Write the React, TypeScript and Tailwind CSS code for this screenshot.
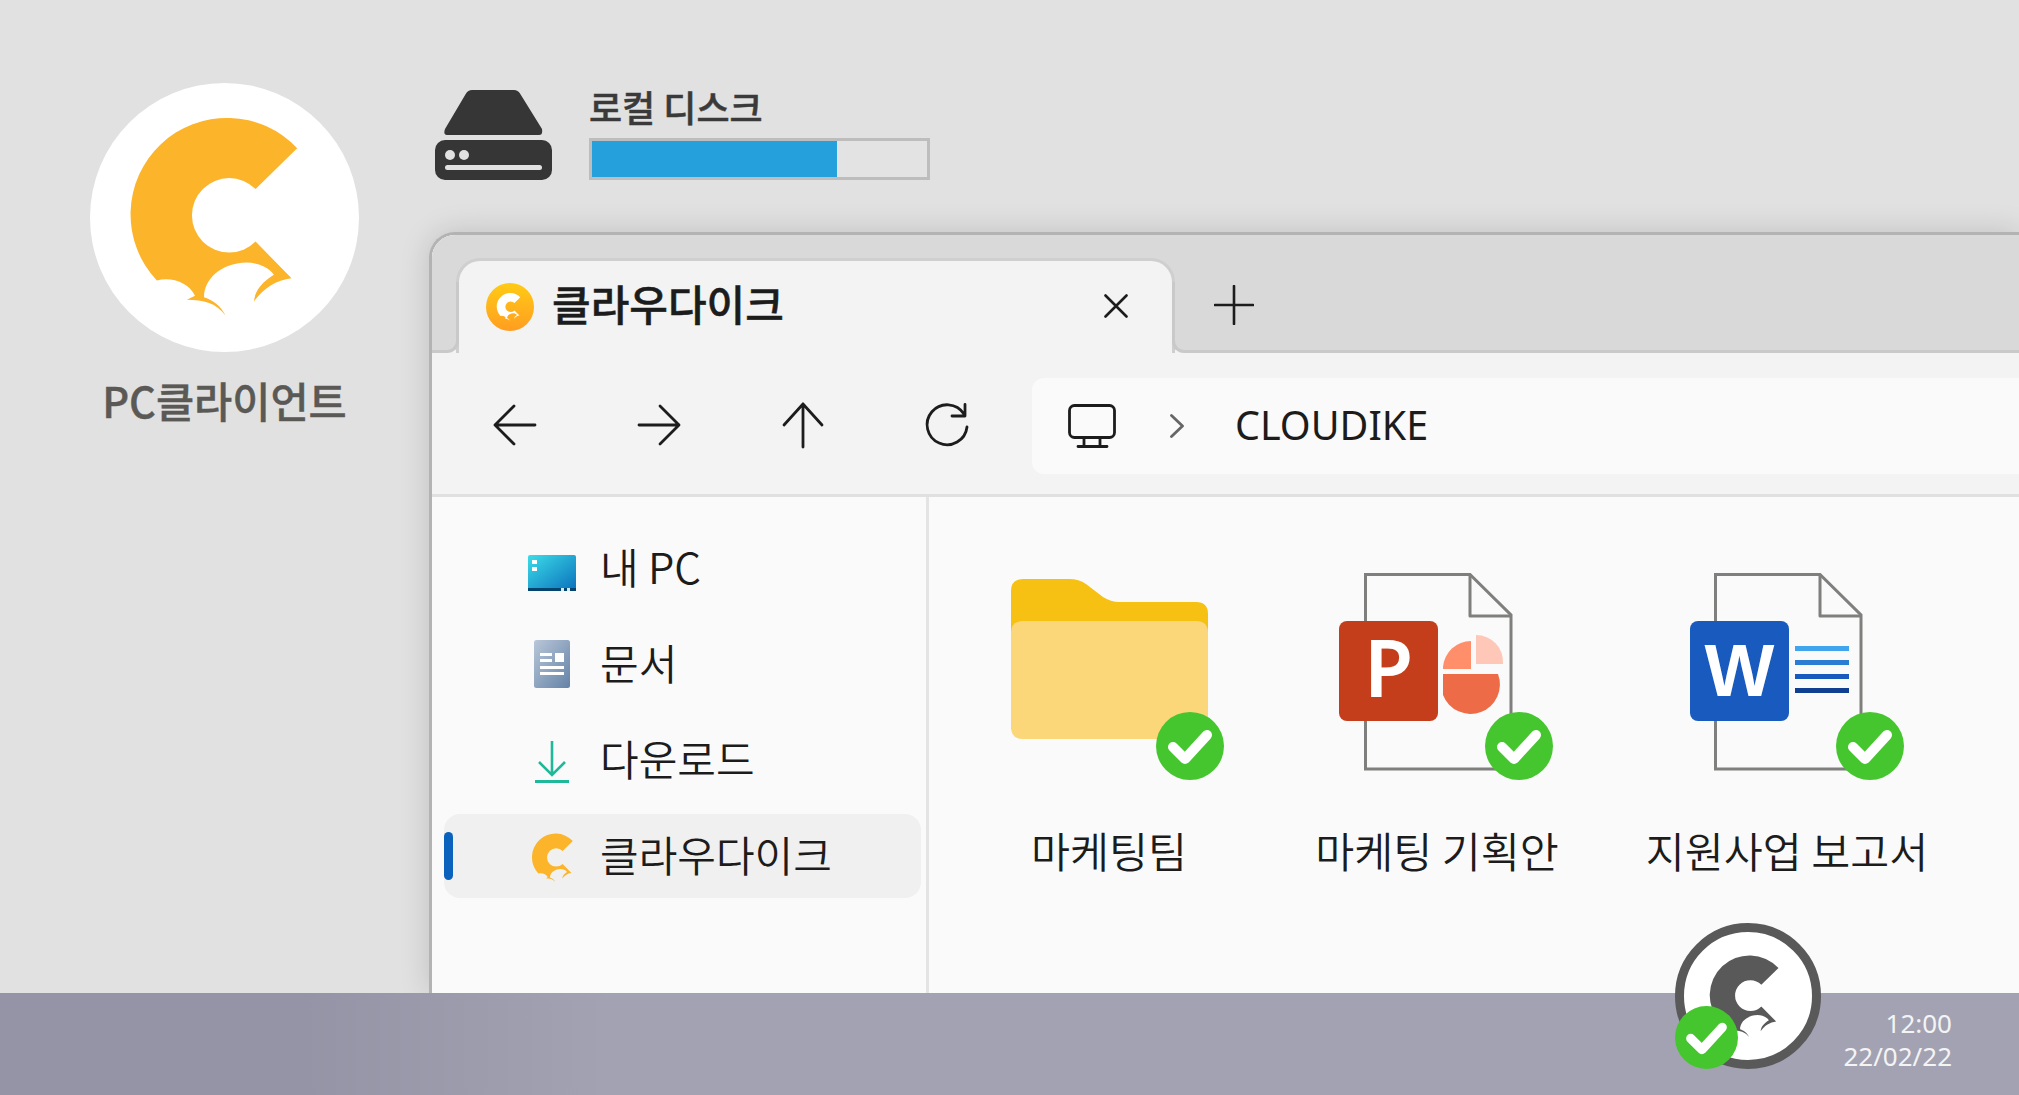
const LOGO = "M712 264A290 290 0 1 0 290 662C330 650 385 665 405 708L380 720C430 720 470 730 497 768C480 735 460 722 432 712C432 660 480 610 560 608C590 608 625 620 642 645C610 665 585 690 582 725C610 685 650 660 695 655L587 545A112 112 0 1 1 587 387Z";

function Logo({ className, fill }: { className: string; fill: string }) {
  return (
    <svg viewBox="90 68 807 809" className={className}>
      <path d={LOGO} fill={fill} />
    </svg>
  );
}

function Badge({ className }: { className: string }) {
  return (
    <svg viewBox="0 0 68 68" className={className}>
      <circle cx="34" cy="34" r="34" fill="#45c52e" />
      <path d="M17 35L29 47L51 23" fill="none" stroke="#fff" strokeWidth="10" strokeLinecap="round" strokeLinejoin="round" />
    </svg>
  );
}

function ToolIcon({ d }: { d: string }) {
  return (
    <svg viewBox="0 0 48 48" className="w-12 h-12 shrink-0 -mt-[2px]">
      <path d={d} fill="none" stroke="#1c1c1c" strokeWidth="2.8" strokeLinecap="round" strokeLinejoin="round" />
    </svg>
  );
}

function Page({ children }: { children: React.ReactNode }) {
  return (
    <svg viewBox="-27 -3 200 204" className="w-[200px] h-[204px]">
      <path d="M1.5 1.5H106L147 42V196H1.5Z" fill="#fafafa" stroke="#7f7f7d" strokeWidth="3" />
      <path d="M106 1.5V43H147" fill="none" stroke="#7f7f7d" strokeWidth="3" strokeLinejoin="round" />
      {children}
    </svg>
  );
}

function DocItem({ w, label, icon }: { w: string; label: string; icon: React.ReactNode }) {
  return (
    <div className={`${w} flex flex-col items-center shrink-0`}>
      <div className="relative h-[212px] w-[200px] flex justify-center">{icon}</div>
      <div className="mt-[37px] text-[42.4px] leading-[62px] font-[350] text-[#1c1c1c] whitespace-nowrap">{label}</div>
    </div>
  );
}

function SideRow({ icon, label, active }: { icon: React.ReactNode; label: string; active?: boolean }) {
  return (
    <div className={`relative h-[84px] w-[477px] rounded-[16px] flex items-center ${active ? "bg-[#f0f0f0]" : ""}`}>
      {active && <div className="absolute left-0 top-[18px] h-[48px] w-[9px] rounded-full bg-[#0a62bc]" />}
      <div className="ml-[78px] w-[60px] h-[84px] flex items-center justify-center shrink-0">{icon}</div>
      <div className="ml-[18px] pb-[5px] text-[42px] leading-[60px] font-[350] text-[#1c1c1c] whitespace-nowrap">{label}</div>
    </div>
  );
}

export default function App() {
  return (
    <div className="w-[2019px] h-[1095px] relative overflow-hidden flex flex-col bg-[#e1e1e1] font-['Noto_Sans_CJK_KR',sans-serif]">
      <div className="h-[993px] flex overflow-hidden">
        <div className="w-[429px] shrink-0 flex flex-col items-start pl-[90px] pt-[83px]">
          <div className="w-[269px] h-[269px] rounded-full bg-white">
            <Logo className="w-[269px] h-[269px]" fill="#fcb42b" />
          </div>
          <div className="w-[269px] mt-[18px] text-center text-[41.5px] leading-[60px] font-medium text-[#5a5955] whitespace-nowrap [-webkit-text-stroke:0.4px_#5a5955]">PC클라이언트</div>
        </div>

        <div className="flex-1 flex flex-col min-w-0">
          <div className="h-[232px] shrink-0 flex items-start pt-[90px]">
            <svg viewBox="0 0 117 90" className="w-[117px] h-[90px] ml-[6px] shrink-0">
              <path d="M10 39L31 3.5Q33 0 37 0H79Q83 0 85 3.5L107 39Q108 45 104 45H12Q8 45 10 39Z" fill="#363636" />
              <rect x="0" y="50" width="117" height="40" rx="10" fill="#363636" />
              <circle cx="15" cy="65" r="5" fill="#e1e1e1" />
              <circle cx="29" cy="65" r="5" fill="#e1e1e1" />
              <rect x="10" y="75" width="97" height="5" rx="2.5" fill="#e1e1e1" />
            </svg>
            <div className="ml-[37px] flex flex-col w-[341px]">
              <div className="text-[36px] leading-[40px] -mt-[4px] h-[52px] font-medium text-[#3a3a3a] whitespace-nowrap [-webkit-text-stroke:0.5px_#3a3a3a]">로컬 디스크</div>
              <div className="h-[42px] border-[3px] border-[#bdbdbd] bg-[#e3e3e3]">
                <div className="h-full w-[73%] bg-[#26a0dc]" />
              </div>
            </div>
          </div>

          <div className="flex-1 flex flex-col rounded-tl-[26px] border-l-[3px] border-t-[3px] border-[#b3b3b3] bg-[#fafafa] overflow-hidden shadow-[0_0_30px_rgba(0,0,0,0.15)]">
            <div className="h-[118px] shrink-0 flex bg-[#f3f3f3]">
              <div className="w-[24px] shrink-0 flex flex-col">
                <div className="h-[47px] shrink-0 bg-[#d9d9d9]" />
                <div className="flex-1 w-[27px] relative z-10 bg-[#d9d9d9] border-b-[3px] border-r-[3px] border-[#c9c9c9] rounded-br-[12px]" />
              </div>
              <div className="w-[719px] shrink-0 bg-[#d9d9d9] pt-[23px]">
                <div className="h-[95px] bg-[#f3f3f3] rounded-t-[24px] border-t-[3px] border-l-[3px] border-r-[3px] border-[#cfcfcf] flex items-center pl-[27px] pr-[44px]">
                  <div className="w-12 h-12 rounded-full bg-gradient-to-b from-[#ffcb14] to-[#ff9d20] flex items-center justify-center shrink-0">
                    <Logo className="w-[38px] h-[38px]" fill="#fff" />
                  </div>
                  <div className="ml-[18px] pb-[8px] text-[42px] leading-[60px] font-medium text-[#1c1c1c] whitespace-nowrap [-webkit-text-stroke:0.5px_#1c1c1c]">클라우다이크</div>
                  <svg viewBox="0 0 24 24" className="w-6 h-6 ml-auto mb-[2px] shrink-0">
                    <path d="M1.5 1.5L22.5 22.5M22.5 1.5L1.5 22.5" stroke="#1c1c1c" strokeWidth="2.6" strokeLinecap="round" />
                  </svg>
                </div>
              </div>
              <div className="flex-1 flex flex-col min-w-0">
                <div className="h-[47px] shrink-0 bg-[#d9d9d9]" />
                <div className="flex-1 -ml-[3px] relative z-10 bg-[#d9d9d9] border-b-[3px] border-l-[3px] border-[#c9c9c9] rounded-bl-[12px] flex items-center pl-[39px] pb-[22px]">
                  <svg viewBox="0 0 40 40" className="w-10 h-10 shrink-0 -mb-[24px] -mt-[24px]">
                    <path d="M20 1V39M1 20H39" stroke="#1c1c1c" strokeWidth="2.6" strokeLinecap="round" />
                  </svg>
                </div>
              </div>
            </div>

            <div className="h-[144px] shrink-0 flex items-center bg-[#f3f3f3] border-b-[3px] border-[#e0e0e0] pl-[59px] pt-[5px] gap-[96px]">
              <ToolIcon d="M44 24H4M23 5L4 24L23 43" />
              <ToolIcon d="M4 24H44M25 5L44 24L25 43" />
              <ToolIcon d="M24 46V3M5 24L24 3L43 24" />
              <ToolIcon d="M44 26A20 20 0 1 1 41 13M42 3.5V15H29" />
              <div className="flex-1 -ml-[35px] h-[96px] rounded-l-[12px] bg-[#fafafa] flex items-center pl-[36px]">
                <svg viewBox="0 0 48 44" className="w-12 h-11 shrink-0">
                  <rect x="1.5" y="1.5" width="45" height="32" rx="5" fill="none" stroke="#1c1c1c" strokeWidth="2.8" />
                  <path d="M16 34V42M32 34V42M10 42.5H39" fill="none" stroke="#1c1c1c" strokeWidth="2.8" strokeLinecap="round" />
                </svg>
                <svg viewBox="0 0 14 24" className="w-[14px] h-6 ml-[54px] shrink-0">
                  <path d="M1.5 1.5L12.5 12L1.5 22.5" fill="none" stroke="#666666" strokeWidth="2.8" strokeLinecap="round" strokeLinejoin="round" />
                </svg>
                <div className="ml-[51px] pb-[2px] text-[39.5px] leading-[50px] text-[#1c1c1c] font-['Noto_Sans',sans-serif] whitespace-nowrap">CLOUDIKE</div>
              </div>
            </div>

            <div className="flex-1 flex bg-[#fafafa]">
              <div className="w-[497px] shrink-0 border-r-[3px] border-[#e4e4e4] pl-[12px] pt-[29px] flex flex-col gap-[12px]">
                <SideRow
                  label="내 PC"
                  icon={
                    <svg viewBox="0 0 48 36" className="w-12 h-9 mt-[10px]">
                      <defs>
                        <linearGradient id="pc" x1="0" y1="0" x2="1" y2="1">
                          <stop offset="0" stopColor="#3cdde8" />
                          <stop offset="1" stopColor="#0a6fbc" />
                        </linearGradient>
                      </defs>
                      <rect width="48" height="36" rx="2" fill="url(#pc)" />
                      <rect y="33" width="48" height="3" fill="#03446f" />
                      <rect x="4" y="5" width="5" height="4" fill="#fff" />
                      <rect x="4" y="12" width="5" height="4" fill="#fff" />
                      <rect x="33" y="33" width="3" height="3" fill="#d8eaf5" />
                      <rect x="39" y="33" width="3" height="3" fill="#d8eaf5" />
                    </svg>
                  }
                />
                <SideRow
                  label="문서"
                  icon={
                    <svg viewBox="0 0 36 48" className="w-9 h-12">
                      <defs>
                        <linearGradient id="doc" x1="0" y1="0" x2="1" y2="1">
                          <stop offset="0" stopColor="#b9c7d9" />
                          <stop offset="1" stopColor="#6482a6" />
                        </linearGradient>
                      </defs>
                      <rect width="36" height="48" rx="2.5" fill="url(#doc)" />
                      <rect x="6" y="13" width="12" height="3" fill="#fff" />
                      <rect x="6" y="19" width="12" height="3" fill="#fff" />
                      <rect x="21" y="13" width="9" height="9" fill="#fff" />
                      <rect x="6" y="26" width="24" height="3" fill="#fff" />
                      <rect x="6" y="32" width="24" height="3" fill="#fff" />
                    </svg>
                  }
                />
                <SideRow
                  label="다운로드"
                  icon={
                    <svg viewBox="0 0 34 42" className="w-[34px] h-[42px] mt-[3px]">
                      <path d="M17 0V34M4 21L17 34L30 21" fill="none" stroke="#1fb89a" strokeWidth="2.6" />
                      <rect x="0" y="39" width="34" height="3" fill="#1fb89a" />
                    </svg>
                  }
                />
                <SideRow active label="클라우다이크" icon={<Logo className="w-[66px] h-[66px] shrink-0 ml-[6px] mt-[3px]" fill="#fcb42b" />} />
              </div>

              <div className="flex-1 flex pl-[30px] pt-[73px] items-start">
                <DocItem
                  w="w-[300px]"
                  label="마케팅팀"
                  icon={
                    <>
                      <svg viewBox="0 0 197 160" className="w-[197px] h-[160px] mt-[9px]">
                        <path d="M0 12Q0 0 12 0H58Q68 0 75 5L92 18Q100 23 108 23H185Q197 23 197 35V150H0Z" fill="#f6c112" />
                        <path d="M0 54Q0 42 12 42H185Q197 42 197 54V148Q197 160 185 160H12Q0 160 0 148Z" fill="#fbd779" />
                      </svg>
                      <Badge className="absolute left-[147px] top-[142px] w-[68px] h-[68px]" />
                    </>
                  }
                />
                <DocItem
                  w="w-[356px]"
                  label="마케팅 기획안"
                  icon={
                    <>
                      <Page>
                        <rect x="-25" y="48" width="99" height="100" rx="8" fill="#c43e1c" />
                        <text x="24.5" y="124" textAnchor="middle" fontSize="80" fontWeight="600" fill="#fff" fontFamily="Noto Sans, sans-serif">P</text>
                        <path d="M107 68V96H79V94A28 28 0 0 1 107 68Z" fill="#ff8f6b" />
                        <path d="M79 101H134A28 28 0 0 1 79 122Z" fill="#ed6c47" />
                        <path d="M112 62A27 27 0 0 1 139 91H112Z" fill="#ffc7b7" />
                      </Page>
                      <Badge className="absolute left-[148px] top-[142px] w-[68px] h-[68px]" />
                    </>
                  }
                />
                <DocItem
                  w="w-[344px]"
                  label="지원사업 보고서"
                  icon={
                    <>
                      <Page>
                        <rect x="-24" y="48" width="99" height="100" rx="8" fill="#185abd" />
                        <text x="25.5" y="123" textAnchor="middle" fontSize="74" fontWeight="700" fill="#fff" fontFamily="Liberation Sans, sans-serif">W</text>
                        <rect x="81" y="73" width="54" height="5" fill="#41a5ee" />
                        <rect x="81" y="87" width="54" height="5" fill="#2b7cd3" />
                        <rect x="81" y="101" width="54" height="5" fill="#185abd" />
                        <rect x="81" y="115" width="54" height="5" fill="#103f91" />
                      </Page>
                      <Badge className="absolute left-[149px] top-[142px] w-[68px] h-[68px]" />
                    </>
                  }
                />
              </div>
            </div>
          </div>
        </div>
      </div>

      <div className="flex-1 bg-gradient-to-r from-[#9594a6] from-15% to-[#a3a2b2] to-30% flex flex-col items-end pr-[67px] pt-[14px] text-[26px] leading-[33px] font-normal text-[#f4f4f4] font-['Noto_Sans',sans-serif]">
        <div>12:00</div>
        <div>22/02/22</div>
      </div>

      <div className="absolute left-[1675px] top-[923px] w-[146px] h-[146px] rounded-full bg-white border-[9px] border-[#595959] flex items-center justify-center">
        <Logo className="w-[111px] h-[111px] shrink-0" fill="#595959" />
      </div>
      <Badge className="absolute left-[1675px] top-[1006px] w-[63px] h-[63px]" />
    </div>
  );
}
